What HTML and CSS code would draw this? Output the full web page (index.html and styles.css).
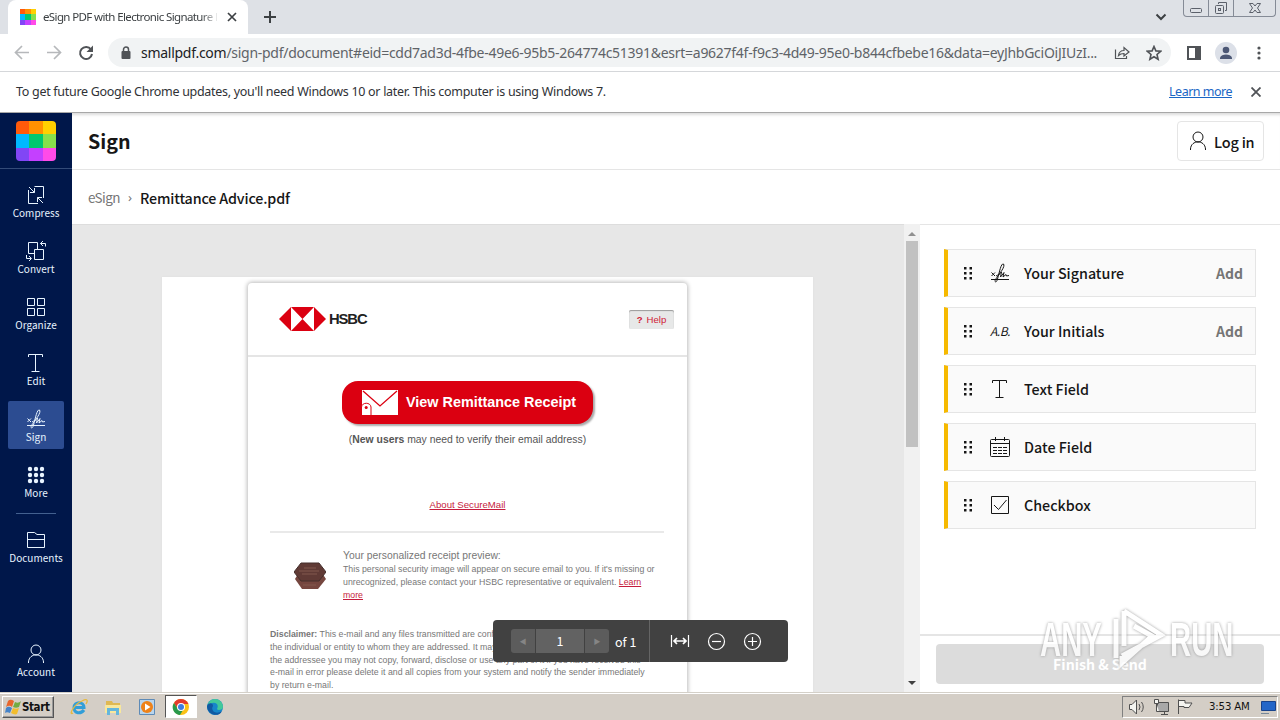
FILE: index.html
```html
<!DOCTYPE html>
<html lang="en">
<head>
  <meta charset="UTF-8">
  <title>eSign PDF with Electronic Signature</title>
  <link rel="stylesheet" href="styles.css">
</head>
<body>
  <svg class="defs" width="0" height="0">
    <symbol id="sign" viewBox="0 0 24 24"><path d="M3 18.500H21M3.500 11.500L7 15M7 11.500L3.500 15M8 15C12 13.500 17.500 5 15.500 3C13 2 11.500 11 9.500 18C8.500 22.500 6 21 7.500 18.500C9 16 11.500 13 13.500 11L12.500 16L16 11.500L15 16L18 13.500L18.500 15L21 14.500"/></symbol>
    <symbol id="text" viewBox="0 0 24 24"><path d="M4.500 6V3.500H18.500V6M11.500 3.500V20.500M7.500 20.500H15.500"/></symbol>
    <symbol id="user" viewBox="0 0 24 24"><circle cx="12" cy="8" r="5"/><path d="M4.500 21V20C5 10.500 19 10.500 19.500 20V21"/></symbol>
    <symbol id="dots" viewBox="0 -1 10 14"><path d="M1 0h2.500v2.500H1zM6.500 0h2.500v2.500H6.500zM1 5h2.500v2.500H1zM6.500 5h2.500v2.500H6.500zM1 10h2.500v2.500H1zM6.500 10h2.500v2.500H6.500z"/></symbol>
  </svg>

  <div class="tabstrip">
    <div class="tab">
      <div class="logo logo-small"><i></i><i></i><i></i><i></i><i></i><i></i><i></i><i></i><i></i></div>
      <span class="tab-title">eSign PDF with Electronic Signature P</span>
      <svg class="tab-close" width="10" height="10" viewBox="0 0 10 10"><path d="M1 1L9 9M9 1L1 9"/></svg>
    </div>
    <svg class="new-tab" width="12" height="12" viewBox="0 0 12 12"><path d="M6 0V12M0 6H12"/></svg>
    <svg class="tab-search" width="12" height="8" viewBox="0 0 12 8"><path d="M1.500 1.500L6 6L10.500 1.500"/></svg>
    <div class="window-buttons">
      <span><svg width="14" height="16" viewBox="0 0 14 16"><rect x="1.500" y="8.500" width="11" height="4" rx="1"/></svg></span>
      <span><svg width="14" height="16" viewBox="0 0 14 16"><path d="M4.500 4V2.500H12.500V10.500H11"/><rect x="1.500" y="5.500" width="8" height="8" rx="1"/><rect x="4.500" y="8.500" width="2" height="2"/></svg></span>
      <span class="wide"><svg width="14" height="16" viewBox="0 0 14 16"><path d="M1.500 3.500H5L7 6L9 3.500H12.500L9.500 8L12.500 12.500H9L7 10L5 12.500H1.500L4.500 8Z"/></svg></span>
    </div>
  </div>

  <div class="toolbar">
    <svg width="98" height="36" viewBox="0 0 98 36" class="nav">
      <path class="off" d="M29 17.500H16M22 11L15.500 17.500L22 24M47 17.500H60M54 11L60.500 17.500L54 24"/>
      <path d="M91 14.500A6 6 0 1 0 92 19"/><path class="fill" d="M93 10.500V17H86.500Z"/>
    </svg>
    <div class="address">
      <svg class="lock" width="10" height="14" viewBox="0 0 10 14"><path d="M2.500 6V3.500A2.500 2.500 0 0 1 7.500 3.500V6"/><rect x="0.500" y="5" width="9" height="8" rx="1"/></svg>
      <span class="url"><b>smallpdf.com</b>/sign-pdf/document#eid=cdd7ad3d-4fbe-49e6-95b5-264774c51391&amp;esrt=a9627f4f-f9c3-4d49-95e0-b844cfbebe16&amp;data=eyJhbGciOiJIUzI...</span>
      <svg class="share" width="16" height="16" viewBox="0 0 16 16"><path d="M1.500 4.500V13.500H12.500V11M4.500 10.500C5 7 7 5.500 10 5.500V2.500L15 7L10 11V8.500C7.500 8.500 6 9 4.500 10.500Z"/></svg>
      <svg class="star" width="16" height="16" viewBox="0 0 16 16"><path d="M8 1.500L9.900 5.900L14.600 6.300L11 9.500L12.100 14.200L8 11.700L3.900 14.200L5 9.500L1.400 6.300L6.100 5.900Z"/></svg>
    </div>
    <svg class="side-panel" width="14" height="14" viewBox="0 0 14 14"><path d="M1 1H13V13H1Z"/><path class="fill" d="M8 1H13V13H8Z"/></svg>
    <svg class="avatar" width="22" height="22" viewBox="0 0 22 22"><circle class="ring" cx="11" cy="11" r="11"/><circle cx="11" cy="8" r="3.300"/><path d="M5 17V15.500C6.500 11.500 15.500 11.500 17 15.500V17Z"/></svg>
    <svg class="kebab" width="4" height="14" viewBox="0 0 4 14"><circle cx="2" cy="2" r="1.600"/><circle cx="2" cy="7" r="1.600"/><circle cx="2" cy="12" r="1.600"/></svg>
  </div>

  <div class="infobar">
    <span class="info-text">To get future Google Chrome updates, you'll need Windows 10 or later. This computer is using Windows 7.</span>
    <a class="info-link">Learn more</a>
    <svg width="10" height="10" viewBox="0 0 10 10"><path d="M0.500 0.500L9.500 9.500M9.500 0.500L0.500 9.500"/></svg>
  </div>

  <div class="app">
    <nav class="sidebar">
      <div class="brand">
        <div class="logo"><i></i><i></i><i></i><i></i><i></i><i></i><i></i><i></i><i></i></div>
      </div>
      <div class="menu">
        <a class="item"><svg width="24" height="24" viewBox="0 0 24 24"><path d="M10.500 3.500H19.500V15M4.500 7V20.500H14M5 4L10.500 9.500M10.500 5V9.500H6M19 20L13.500 14.500M13.500 19V14.500H18"/></svg><span>Compress</span></a>
        <a class="item"><svg width="24" height="24" viewBox="0 0 24 24"><path d="M10.500 14.500H4.500V3.500H13.500V10.500M10.500 10.500H19.500V20.500H10.500ZM16.500 4.500H21.500V7.500M19 2L16.500 4.500L19 7M2.500 16V19.500H7M5 17L7.500 19.500L5 22"/></svg><span>Convert</span></a>
        <a class="item"><svg width="24" height="24" viewBox="0 0 24 24"><path d="M3.500 3.500H10.500V10.500H3.500ZM13.500 3.500H20.500V10.500H13.500ZM3.500 13.500H10.500V20.500H3.500ZM13.500 13.500H20.500V20.500H13.500Z"/></svg><span>Organize</span></a>
        <a class="item"><svg width="24" height="24"><use href="#text"/></svg><span>Edit</span></a>
        <a class="item active"><svg width="24" height="24"><use href="#sign"/></svg><span>Sign</span></a>
        <a class="item"><svg class="solid" width="24" height="24" viewBox="0 0 24 24"><circle cx="6" cy="6" r="2.200"/><circle cx="12" cy="6" r="2.200"/><circle cx="18" cy="6" r="2.200"/><circle cx="6" cy="12" r="2.200"/><circle cx="12" cy="12" r="2.200"/><circle cx="18" cy="12" r="2.200"/><circle cx="6" cy="18" r="2.200"/><circle cx="12" cy="18" r="2.200"/><circle cx="18" cy="18" r="2.200"/></svg><span>More</span></a>
      </div>
      <a class="item documents"><svg width="24" height="24" viewBox="0 0 24 24"><path d="M3.500 4.500H10.500L13 6.500H20.500V19.500H3.500ZM3.500 11.500H20.500"/></svg><span>Documents</span></a>
      <a class="item account"><svg width="24" height="24"><use href="#user"/></svg><span>Account</span></a>
    </nav>

    <main>
      <header>
        <h1>Sign</h1>
        <button class="login"><svg width="24" height="24"><use href="#user"/></svg>Log in</button>
      </header>
      <div class="breadcrumb"><span class="crumb">eSign</span><span class="sep">›</span><span class="file">Remittance Advice.pdf</span></div>

      <div class="workspace">
        <div class="viewer">
          <div class="page">
            <div class="mail">
              <div class="mail-header">
                <svg width="47" height="24" viewBox="0 0 47 24"><path class="red" d="M0 12L12 0H35L47 12L35 24H12Z"/><path class="white" d="M12 0L23.500 12L12 24ZM35 0L23.500 12L35 24Z"/></svg>
                <b class="bank">HSBC</b>
                <span class="help"><b>?</b>Help</span>
              </div>
              <div class="receipt">
                <svg width="38" height="26" viewBox="0 0 38 26"><rect class="white" x="1" y="0" width="36" height="25"/><path class="line" d="M2 1L19 16L36 1"/><path class="lock-shape" d="M0.500 25V17C1 12 9.500 12 10 17V25"/><circle class="red" cx="5.200" cy="17.500" r="1.500"/></svg>
                View Remittance Receipt
              </div>
              <div class="verify">(<b>New users</b> may need to verify their email address)</div>
              <div class="about"><a>About SecureMail</a></div>
              <div class="preview">
                <svg width="32" height="28" viewBox="0 0 32 28"><path class="wood-bottom" d="M1 17L8 5H24L32 17L24 27H8Z"/><path class="wood-top" d="M0 10L7 1H25L32 10L25 19H7Z"/><path class="grain" d="M5 9H25M8 12H23M10 6H22M9 23H22"/></svg>
                <div>
                  <div class="preview-title">Your personalized receipt preview:</div>
                  <div class="small">This personal security image will appear on secure email to you. If it's missing or<br>unrecognized, please contact your HSBC representative or equivalent. <a>Learn</a><br><a>more</a></div>
                </div>
              </div>
              <div class="small disclaimer"><b>Disclaimer:</b> This e-mail and any files transmitted are confidential and intended solely for<br>the individual or entity to whom they are addressed. It may contain privileged. If not<br>the addressee you may not copy, forward, disclose or use any part of it if you have received this<br>e-mail in error please delete it and all copies from your system and notify the sender immediately<br>by return e-mail.</div>
            </div>
          </div>
          <div class="pager">
            <div class="pages"><span>◀</span><span class="num">1</span><span>▶</span></div>
            <span class="of">of 1</span>
            <div class="zoom">
              <svg width="20" height="20" viewBox="0 0 20 20"><path d="M1.500 4V16M18.500 4V16"/><path class="arrow" d="M4 10H16M7 7L4 10L7 13M13 7L16 10L13 13"/></svg>
              <svg width="20" height="20" viewBox="0 0 20 20"><circle cx="10.500" cy="10.500" r="8"/><path d="M6 10.500H15"/></svg>
              <svg width="20" height="20" viewBox="0 0 20 20"><circle cx="10.500" cy="10.500" r="8"/><path d="M6 10.500H15M10.500 6V15"/></svg>
            </div>
          </div>
        </div>
        <div class="scrollbar"><i class="up"></i><div class="thumb"></div><i class="down"></i></div>
        <aside>
          <div class="fields">
            <div class="field"><svg class="drag" width="10" height="14"><use href="#dots"/></svg><svg width="24" height="24"><use href="#sign"/></svg><span>Your Signature</span><b>Add</b></div>
            <div class="field"><svg class="drag" width="10" height="14"><use href="#dots"/></svg><em>A.B.</em><span>Your Initials</span><b>Add</b></div>
            <div class="field"><svg class="drag" width="10" height="14"><use href="#dots"/></svg><svg width="24" height="24"><use href="#text"/></svg><span>Text Field</span></div>
            <div class="field"><svg class="drag" width="10" height="14"><use href="#dots"/></svg><svg width="24" height="24" viewBox="0 0 24 24"><rect x="2.500" y="4.500" width="19" height="17" rx="1"/><path d="M2.500 8.500H21.500M7.500 2V6M16.500 2V6"/><path stroke-dasharray="4 1" d="M5 12.500H19M5 15.500H19M5 18.500H19"/></svg><span>Date Field</span></div>
            <div class="field"><svg class="drag" width="10" height="14"><use href="#dots"/></svg><svg width="24" height="24" viewBox="0 0 24 24"><path d="M3.500 3.500H20.500V20.500H3.500ZM6 12L10.500 16.500L18.500 7"/></svg><span>Checkbox</span></div>
          </div>
          <div class="finish"><button>Finish &amp; Send</button></div>
        </aside>
      </div>
    </main>
  </div>

  <div class="taskbar">
    <div class="start"><svg width="18" height="16" viewBox="0 0 16 16"><path fill="#e8662c" d="M3 2C5 0 7 1 9 2L7 8C5 6 3 7 1 8Z"/><path fill="#72ac43" d="M10 3C12 4 14 4 16 2L14 8C12 9 10 9 8 8Z"/><path fill="#4583c9" d="M1 9C3 7 5 8 7 9L5 14C3 13 1 13 0 14Z"/><path fill="#f2bd2d" d="M8 9C10 10 12 10 14 9L12 15C10 16 8 15 6 14Z"/></svg>Start</div>
    <div class="quick">
      <span><svg width="18" height="18" viewBox="0 0 18 18"><path fill="none" stroke="#319ed8" stroke-width="3" d="M4 9.500H14C14 3 4 3 4 9.500C4 16 11 16 14 12"/><path fill="none" stroke="#e7b93d" stroke-width="1.300" d="M3 15C-2 18 4 6 12 3C18 0 18 3 16 6"/></svg></span>
      <span><svg width="18" height="18" viewBox="0 0 18 18"><path fill="#dfb852" d="M2 3H8L9 5H16V15H2Z"/><path fill="#f8e79c" d="M1 7H17V15H1Z"/><path fill="#65b6dc" d="M3 10H15V17H12V13H6V17H3Z"/></svg></span>
      <span><svg width="18" height="18" viewBox="0 0 18 18"><path fill="#b9d5ed" stroke="#5e8bb7" d="M1.500 1.500H16.500V16.500H1.500Z"/><circle cx="9" cy="9" r="6" fill="#ee8219"/><path fill="#fff" d="M7 5.500L12.500 9L7 12.500Z"/></svg></span>
      <span class="running"><svg width="18" height="18" viewBox="0 0 18 18"><circle cx="9" cy="9" r="8" fill="#fbc116"/><path fill="#e33b2e" d="M2 5C5 -1 14 0 16.500 6H9L6 11Z"/><path fill="#29994b" d="M2 5L6.500 12L11 12L8 17C1 16 -1 9 2 5Z"/><circle cx="9" cy="9" r="4" fill="#fff"/><circle cx="9" cy="9" r="3" fill="#3e7de0"/></svg></span>
      <span><svg width="18" height="18" viewBox="0 0 18 18"><circle cx="9" cy="9" r="8" fill="#1686c9"/><path fill="#42c99a" d="M3 4C8 -2 17 2 17 9C17 12 12 13 11 11C14 5 7 2 1 8Z"/><path fill="#1159a2" d="M7 8C4 13 10 17 16 13C13 20 1 17 1 8C3 4 7 5 7 8Z"/></svg></span>
    </div>
    <div class="tray">
      <svg width="18" height="18" viewBox="0 0 18 18"><path d="M1.500 6.500H4L8.500 2V16L4 11.500H1.500Z"/><path class="waves" d="M11 6Q13 9 11 12M13.500 4Q17 9 13.500 14"/></svg>
      <svg width="18" height="18" viewBox="0 0 18 18"><path class="screen" d="M5.500 4.500H16.500V13.500H5.500Z"/><path d="M9 16.500H16M12.500 14V16M2.500 1.500V5.500H6.500V1.500ZM4.500 5V13.500H7"/></svg>
      <svg width="18" height="18" viewBox="0 0 18 18"><path d="M2.500 1.500V16M2.500 2.500H9V5H16L13 9.500H8V8.500H2.500"/></svg>
      <span>3:53 AM</span>
      <svg width="16" height="18" viewBox="0 0 16 18"><path fill="#2366c8" stroke="#18438b" d="M1.500 3.500H15.500V12.500H1.500Z"/><path stroke="#789" d="M1 15.500H9"/></svg>
    </div>
  </div>

  <div class="watermark"><span>ANY</span><svg width="58" height="68" viewBox="0 0 58 68"><path d="M16 5L53 29L14 50M16 5V40M26 20L44 30L14 57V50M8 13V52"/></svg><span>RUN</span></div>
</body>
</html>
```
FILE: styles.css
```css
* {
  box-sizing: border-box;
}

body {
  margin: 0;
  width: 1280px;
  height: 720px;
  overflow: hidden;
  position: relative;
  display: flex;
  flex-direction: column;
  font-family: "Noto Sans CJK SC", "Noto Sans", sans-serif;
  color: #161616;
  background: #fff;
}

svg {
  flex: none;
  fill: none;
  stroke: currentColor;
}

.defs {
  position: absolute;
}

/* browser */
.tabstrip {
  height: 34px;
  flex: none;
  background: #dee1e6;
  display: flex;
  color: #3c4043;
  font-family: "Noto Sans", sans-serif;
}

.tab {
  width: 240px;
  margin-left: 8px;
  padding: 0 11px 0 12px;
  display: flex;
  align-items: center;
  background: #fff;
  border-radius: 8px 8px 0 0;
}

.logo {
  width: 40px;
  height: 40px;
  border-radius: 4px;
  overflow: hidden;
  display: grid;
  grid-template-columns: repeat(3, 1fr);
}

.logo i:nth-child(1) { background: #ff5a0a; }
.logo i:nth-child(2) { background: #ff9100; }
.logo i:nth-child(3) { background: #ffd000; }
.logo i:nth-child(4) { background: #00b8ff; }
.logo i:nth-child(5) { background: #00c86e; }
.logo i:nth-child(6) { background: #87e04b; }
.logo i:nth-child(7) { background: #8146f5; }
.logo i:nth-child(8) { background: #c440ff; }
.logo i:nth-child(9) { background: #ff4be8; }

.logo-small {
  width: 16px;
  height: 16px;
  border-radius: 0;
}

.tab-title {
  width: 174px;
  margin: -1px 0 0 7px;
  overflow: hidden;
  white-space: nowrap;
  font-size: 11.5px;
  letter-spacing: -0.62px;
  mask-image: linear-gradient(to right, #000 158px, transparent 176px);
}

.tab-close {
  margin-left: auto;
  stroke-width: 1.7;
}

.new-tab {
  margin: 11px 0 0 16px;
  stroke-width: 2;
}

.tab-search {
  margin: 13px 16px 0 auto;
  stroke-width: 2;
}

.window-buttons {
  display: flex;
  height: 17px;
  margin-right: 4px;
  border: 1px solid #858b96;
  border-top: 0;
  border-radius: 0 0 4px 4px;
  color: #5b606a;
}

.window-buttons span {
  width: 25px;
  display: flex;
  justify-content: center;
  border-right: 1px solid #858b96;
}

.window-buttons .wide {
  width: 41px;
  border: 0;
}

.toolbar {
  height: 38px;
  flex: none;
  display: flex;
  align-items: center;
  border-bottom: 1px solid #d5d7da;
  color: #505357;
}

.nav {
  stroke-width: 2;
}

.nav .off {
  stroke: #b6b8bb;
  stroke-width: 1.7;
}

.fill {
  fill: currentColor;
  stroke: none;
}

.address {
  width: 1063px;
  height: 29px;
  margin-left: 10px;
  padding-left: 13px;
  border-radius: 15px;
  background: #f1f3f4;
  display: flex;
  align-items: center;
}

.lock {
  stroke-width: 1.5;
}

.lock rect {
  fill: currentColor;
  stroke: none;
}

.url {
  width: 973px;
  margin-left: 10px;
  white-space: nowrap;
  font: 14px "Noto Sans", sans-serif;
  letter-spacing: -0.275px;
  color: #5f6368;
}

.url b {
  font-weight: 400;
  color: #202124;
}

.share {
  stroke-width: 1.2;
}

.star {
  margin-left: 16px;
  stroke-width: 1.6;
}

.side-panel {
  margin-left: 16px;
  stroke-width: 2;
}

.avatar {
  margin-left: 14px;
  fill: #4c5775;
  stroke: none;
}

.ring {
  fill: #dce0e8;
}

.kebab {
  margin-left: 20px;
  fill: currentColor;
  stroke: none;
}

.infobar {
  height: 41px;
  flex: none;
  padding: 0 19px 0 16px;
  display: flex;
  align-items: center;
  border-bottom: 1px solid #a8a8a8;
  font: 12.5px "Noto Sans", sans-serif;
  color: #303236;
}

.info-text {
  margin-top: -2px;
  letter-spacing: -0.295px;
}

.info-link {
  margin: -2px 19px 0 auto;
  letter-spacing: -0.5px;
  color: #1a66c5;
  text-decoration: underline;
}

.infobar svg {
  stroke: #505357;
  stroke-width: 1.8;
}

/* application */
.app {
  flex: 1;
  min-height: 0;
  display: flex;
}

.sidebar {
  width: 72px;
  display: flex;
  flex-direction: column;
  align-items: center;
  background: #00174a;
  color: #e8f4ff;
}

.brand {
  width: 72px;
  height: 56px;
  padding: 8px 16px;
  border-bottom: 1px solid #334b78;
}

.menu {
  width: 40px;
  height: 345px;
  padding-top: 8px;
  display: flex;
  flex-direction: column;
  align-items: center;
  gap: 8px;
  border-bottom: 1px solid #43608f;
}

.item {
  width: 56px;
  height: 48px;
  flex: none;
  padding-top: 6px;
  display: flex;
  flex-direction: column;
  align-items: center;
  border-radius: 2px;
  font-size: 10px;
  line-height: 12px;
  letter-spacing: 0.02px;
}

.active {
  background: #2c4c91;
}

.solid {
  fill: currentColor;
  stroke: none;
}

.documents {
  margin-top: 8px;
}

.account {
  margin: auto 0 8px;
}

main {
  flex: 1;
  display: flex;
  flex-direction: column;
}

header {
  height: 57px;
  flex: none;
  padding: 0 16px;
  display: flex;
  align-items: center;
  justify-content: space-between;
  border-bottom: 1px solid #e5e5e5;
  box-shadow: inset 0 4px 3px -2px #ddd;
}

h1 {
  margin: 0;
  font-size: 19.7px;
  line-height: 28px;
}

.login {
  width: 87px;
  height: 40px;
  padding: 0 8px;
  display: flex;
  align-items: center;
  gap: 4px;
  border: 1px solid #e5e5e5;
  border-radius: 4px;
  background: #fff;
  color: #161616;
  font: 500 14.5px "Noto Sans CJK SC", sans-serif;
  letter-spacing: -0.2px;
  white-space: nowrap;
}

.breadcrumb {
  height: 54px;
  flex: none;
  padding-left: 16px;
  display: flex;
  align-items: center;
}

.crumb {
  width: 32px;
  font-size: 13.5px;
  letter-spacing: -0.6px;
}

.crumb,
.sep {
  color: #777;
}

.sep {
  width: 20px;
  text-align: center;
  font: 13px "Noto Sans", sans-serif;
}

.file {
  font-size: 14.3px;
  font-weight: 500;
  letter-spacing: -0.16px;
}

.workspace {
  height: 468px;
  display: flex;
}

.viewer {
  width: 832px;
  position: relative;
  overflow: hidden;
  background: #e7e7e7;
  border-top: 1px solid #ddd;
  padding: 52px 91px 0 90px;
}

.page {
  height: 600px;
  padding: 6px 0 0 86px;
  background: #fff;
  box-shadow: 0 0 2px #ddd;
}

.mail {
  width: 439px;
  height: 600px;
  border-radius: 4px;
  box-shadow: 0 0 4px 1px #bbb;
  font-family: "Liberation Sans", Arial, sans-serif;
  color: #555;
  white-space: nowrap;
}

.mail-header {
  height: 74px;
  padding: 0 13px 0 31px;
  display: flex;
  align-items: center;
  border-bottom: 2px solid #e5e5e5;
}

.mail svg {
  stroke: none;
}

.red {
  fill: #db0011;
}

.white {
  fill: #fff;
}

.bank {
  margin-left: 3px;
  color: #222;
  font-size: 14.8px;
  letter-spacing: -1.1px;
}

.help {
  width: 45px;
  height: 19px;
  margin-left: auto;
  display: flex;
  align-items: center;
  justify-content: center;
  gap: 4px;
  border-radius: 2px;
  background: #e7e8e8;
  box-shadow: inset 0 1px 1px #999;
  color: #d02136;
  font-size: 9.6px;
}

.receipt {
  width: 251px;
  height: 43px;
  margin: 24px 0 0 94px;
  padding: 0 0 1px 19px;
  display: flex;
  align-items: center;
  gap: 7px;
  border-radius: 16px;
  background: #db0011;
  box-shadow: 2px 2px 2px #aaa;
  color: #fff;
  font-size: 14.4px;
  font-weight: bold;
}

.receipt svg {
  margin-top: 1px;
}

.receipt .line {
  stroke: #db0011;
  stroke-width: 1.3;
}

.receipt .lock-shape {
  fill: #fff;
  stroke: #db0011;
}

.verify {
  margin-top: 9px;
  text-align: center;
  font-size: 10.4px;
  line-height: 14px;
}

.about {
  margin-top: 51px;
  text-align: center;
  font-size: 9.65px;
  line-height: 13px;
}

.mail a {
  color: #c61c3d;
  text-decoration: underline;
}

.preview {
  margin: 20px 23px 0 22px;
  height: 97px;
  padding: 16px 0 0 24px;
  display: flex;
  gap: 17px;
  border-top: 2px solid #e9e9e9;
}

.preview svg {
  margin-top: 13px;
}

.wood-bottom {
  fill: #75463f;
}

.wood-top {
  fill: #603a35;
  stroke: #442f2c;
}

.grain {
  stroke: #82584f;
}

.preview-title {
  font-size: 10.35px;
  line-height: 14px;
  color: #777;
}

.small {
  font-size: 8.78px;
  line-height: 12.75px;
  color: #777;
}

.disclaimer {
  margin-left: 22px;
}

.pager {
  position: absolute;
  left: 421px;
  top: 395px;
  width: 295px;
  height: 42px;
  padding-left: 18px;
  display: flex;
  align-items: center;
  border-radius: 4px;
  background: #414141;
  color: #fff;
  font-size: 12.5px;
}

.pages {
  display: flex;
  gap: 1px;
}

.pages span {
  width: 24px;
  height: 24px;
  line-height: 24px;
  text-align: center;
  background: #5c5c5c;
  color: #858585;
  font-size: 7px;
}

.pages span:first-child {
  border-radius: 3px 0 0 3px;
}

.pages span:last-child {
  border-radius: 0 3px 3px 0;
}

.pages .num {
  width: 48px;
  background: #626262;
  color: #fff;
  font-size: 12.5px;
}

.of {
  width: 40px;
  padding-left: 6px;
}

.zoom {
  height: 42px;
  display: flex;
  align-items: center;
  gap: 16px;
  padding-left: 20px;
  border-left: 1px solid #656565;
}

.zoom svg {
  stroke-width: 1.2;
}

.zoom .arrow {
  stroke-width: 1.7;
}

.scrollbar {
  width: 16px;
  display: flex;
  flex-direction: column;
  align-items: center;
  background: #f1f1f1;
}

.thumb {
  width: 12px;
  height: 206px;
  margin-top: 5px;
  background: #c1c1c1;
}

.up,
.down {
  border: 4px solid transparent;
}

.up {
  margin-top: 4px;
  border-bottom-color: #909090;
}

.down {
  margin: auto 0 3px;
  border-top-color: #404040;
}

aside {
  flex: 1;
  display: flex;
  flex-direction: column;
  justify-content: space-between;
  border-top: 1px solid #e5e5e5;
}

.fields {
  padding: 24px 24px 0;
  display: flex;
  flex-direction: column;
  gap: 10px;
}

.field {
  height: 48px;
  padding: 0 12px 0 15px;
  display: flex;
  align-items: center;
  gap: 12px;
  border: 1px solid #e5e5e5;
  border-left: 4px solid #f6b900;
  background: #fafafa;
  font-size: 14.3px;
  line-height: 20px;
  font-weight: 500;
}

.drag {
  fill: currentColor;
  stroke: none;
  margin-right: 3px;
}

.field b {
  margin-left: auto;
  color: #757575;
  font-size: 14px;
}

.field em {
  width: 24px;
  padding-left: 2px;
  font-size: 12px;
  font-weight: 400;
  letter-spacing: -0.5px;
}

.finish {
  height: 58px;
  padding: 8px 16px;
  border-top: 2px solid #e5e5e5;
}

.finish button {
  width: 328px;
  height: 40px;
  border: 0;
  border-radius: 4px;
  background: #dcdcdc;
  color: #fff;
  font: bold 14.1px "Noto Sans CJK SC", sans-serif;
}

/* desktop taskbar */
.taskbar {
  height: 28px;
  flex: none;
  display: flex;
  align-items: center;
  border-top: 1px solid #d4d0c8;
  box-shadow: inset 0 1px #fff;
  background: #d4cec6;
  font-family: "DejaVu Sans Condensed", sans-serif;
  color: #111;
}

.start {
  width: 52px;
  height: 22px;
  margin-left: 2px;
  padding-left: 1px;
  display: flex;
  align-items: center;
  border: 1px solid;
  border-color: #fff #555 #555 #fff;
  box-shadow: inset -1px -1px #999;
  font-size: 11.5px;
  font-weight: bold;
  letter-spacing: -0.4px;
}

.start svg,
.quick svg {
  stroke: none;
}

.quick {
  margin-left: 9px;
  display: flex;
  gap: 2px;
}

.quick span {
  width: 32px;
  height: 23px;
  display: flex;
  align-items: center;
  justify-content: center;
}

.quick .running {
  background: #fff;
  border: 1px solid;
  border-color: #555 #fff #fff #555;
}

.tray {
  width: 156px;
  height: 22px;
  margin: 0 2px 0 auto;
  padding-left: 5px;
  display: flex;
  align-items: center;
  gap: 6px;
  border: 1px solid;
  border-color: #808080 #fff #fff #808080;
  font-size: 11.3px;
}

.tray svg {
  stroke: #505050;
  fill: #f4f4f0;
}

.tray .waves {
  fill: none;
}

.tray .screen {
  fill: #a8a8a8;
}

.tray span {
  margin: 0 4px 0 9px;
  letter-spacing: -0.15px;
  white-space: nowrap;
}

.watermark {
  position: absolute;
  left: 1040px;
  top: 606px;
  display: flex;
  align-items: center;
  gap: 4px;
  opacity: 0.8;
  filter: drop-shadow(0 0 1.5px #888);
  color: #fff;
  font: bold 48px/68px "Liberation Sans", sans-serif;
}

.watermark span {
  width: 64px;
  transform: scaleX(0.61);
  transform-origin: left;
}

.watermark svg {
  stroke-width: 5;
}
```
